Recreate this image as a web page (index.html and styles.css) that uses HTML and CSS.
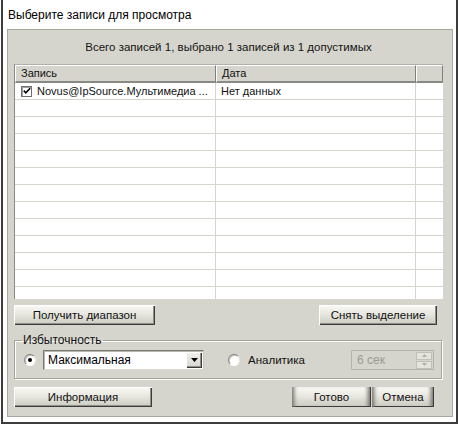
FILE: index.html
```html
<!DOCTYPE html>
<html lang="ru">
<head>
    <meta charset="UTF-8">
    <title>Выберите записи для просмотра</title>
    <link rel="stylesheet" href="styles.css">
</head>
<body>

    <div class="window">
        <div class="title">Выберите записи для просмотра</div>

        <div class="panel">
            <div class="summary">Всего записей 1, выбрано 1 записей из 1 допустимых</div>

            <div class="table">
                <div class="row head">
                    <div class="cell c1">Запись</div>
                    <div class="cell c2">Дата</div>
                    <div class="cell c3"></div>
                </div>
                <div class="body">
                    <div class="row">
                        <div class="cell c1">
                            <span class="check">
                                <svg width="8" height="8" viewBox="0 0 8 8"><polyline points="0.8,3.6 2.8,5.8 7.2,1.2" fill="none" stroke="#000" stroke-width="1.6"/></svg>
                            </span>
                            <span class="name">Novus@IpSource.Мультимедиа ...</span>
                        </div>
                        <div class="cell c2">Нет данных</div>
                        <div class="cell c3"></div>
                    </div>
                    <div class="row"><div class="cell c1"></div><div class="cell c2"></div><div class="cell c3"></div></div>
                    <div class="row"><div class="cell c1"></div><div class="cell c2"></div><div class="cell c3"></div></div>
                    <div class="row"><div class="cell c1"></div><div class="cell c2"></div><div class="cell c3"></div></div>
                    <div class="row"><div class="cell c1"></div><div class="cell c2"></div><div class="cell c3"></div></div>
                    <div class="row"><div class="cell c1"></div><div class="cell c2"></div><div class="cell c3"></div></div>
                    <div class="row"><div class="cell c1"></div><div class="cell c2"></div><div class="cell c3"></div></div>
                    <div class="row"><div class="cell c1"></div><div class="cell c2"></div><div class="cell c3"></div></div>
                    <div class="row"><div class="cell c1"></div><div class="cell c2"></div><div class="cell c3"></div></div>
                    <div class="row"><div class="cell c1"></div><div class="cell c2"></div><div class="cell c3"></div></div>
                    <div class="row"><div class="cell c1"></div><div class="cell c2"></div><div class="cell c3"></div></div>
                    <div class="row"><div class="cell c1"></div><div class="cell c2"></div><div class="cell c3"></div></div>
                    <div class="row"><div class="cell c1"></div><div class="cell c2"></div><div class="cell c3"></div></div>
                </div>
            </div>

            <div class="actions">
                <button class="btn btn-range">Получить диапазон</button>
                <button class="btn btn-clear">Снять выделение</button>
            </div>

            <fieldset class="group">
                <legend>Избыточность</legend>
                <div class="group-row">
                    <span class="radio checked"></span>
                    <div class="combo">
                        <span class="combo-text">Максимальная</span>
                        <span class="combo-btn">
                            <svg width="7" height="4" viewBox="0 0 7 4"><polygon points="0,0 7,0 3.5,4" fill="#000"/></svg>
                        </span>
                    </div>
                    <span class="radio second"></span>
                    <span class="radio-label">Аналитика</span>
                    <div class="spin">
                        <span class="spin-text">6 сек</span>
                        <span class="spin-btns">
                            <span class="spin-btn"><svg width="5" height="3" viewBox="0 0 5 3"><polygon points="0,3 5,3 2.5,0" fill="#b0b0a8"/></svg></span>
                            <span class="spin-btn"><svg width="5" height="3" viewBox="0 0 5 3"><polygon points="0,0 5,0 2.5,3" fill="#b0b0a8"/></svg></span>
                        </span>
                    </div>
                </div>
            </fieldset>

            <div class="footer">
                <button class="btn btn-info">Информация</button>
                <button class="btn btn-ok">Готово</button>
                <button class="btn btn-cancel">Отмена</button>
            </div>
        </div>
    </div>

</body>
</html>
```

FILE: styles.css
```css
body {
    margin: 0;
    background: #fff;
    font-family: 'Liberation Sans', Arial, sans-serif;
    font-size: 11px;
    color: #111;
}

.window {
    box-sizing: border-box;
    width: 457px;
    height: 424px;
    margin-left: 1px;
    border: 2px solid #3c3c3c;
    border-top: none;
    background: #fff;
}

.title {
    height: 29px;
    padding-left: 5px;
    font-size: 12px;
    line-height: 30px;
    color: #000;
}

.panel {
    margin: 0 3px 0 4px;
    padding: 0 9px 9px 6px;
    background: #d6d5cd;
    border: 1px solid #a8a8a0;
}

.summary {
    height: 34px;
    line-height: 35px;
    text-align: center;
    font-size: 11.5px;
    color: #141414;
}

/* table */

.table {
    width: 428px;
    border-left: 1px solid #8a8a84;
    border-top: 1px solid #b0b0a8;
    background: #fff;
}

.row {
    display: grid;
    grid-template-columns: 201px 200px 27px;
    height: 17px;
}

.cell {
    box-sizing: border-box;
    border-right: 1px solid #d6d5cd;
    border-bottom: 1px solid #d6d5cd;
    line-height: 16px;
    padding-left: 5px;
    white-space: nowrap;
    overflow: hidden;
}

.cell.c1 {
    display: flex;
    align-items: center;
}

.cell.c3 {
    border-right: none;
}

.head {
    height: 18px;
}

.head .cell {
    background: #d6d5cd;
    border-top: 1px solid #fff;
    border-left: 1px solid #fff;
    border-right: 1px solid #808080;
    border-bottom: 2px solid #8a8a84;
    line-height: 15px;
}

.body {
    height: 216px;
    overflow: hidden;
}

.check {
    box-sizing: border-box;
    display: inline-flex;
    align-items: center;
    justify-content: center;
    width: 11px;
    height: 11px;
    margin: 0 5px 0 1px;
    background: #fff;
    border: 1px solid #6f6f6f;
    box-shadow: inset 1px 1px 0 #a0a0a0;
}

/* buttons */

.btn {
    box-sizing: border-box;
    height: 20px;
    padding: 0;
    border: none;
    font-family: 'Liberation Sans', Arial, sans-serif;
    font-size: 11.5px;
    color: #111;
    background: linear-gradient(#fafaf6, #e8e7e0 45%, #cbcabf);
    box-shadow: inset 1px 1px 0 #fff, inset -1px -1px 0 #3c3c3c, inset -2px -2px 0 #908f88;
}

.actions {
    display: flex;
    justify-content: space-between;
    margin-top: 6px;
    padding-right: 6px;
}

.btn-range {
    width: 141px;
}

.btn-clear {
    width: 118px;
}

.footer {
    display: flex;
    gap: 1px;
    margin-top: 8px;
}

.btn-info {
    width: 138px;
    margin-right: auto;
}

.btn-ok {
    width: 79px;
}

.btn-cancel {
    width: 62px;
    margin-right: 9px;
}

.btn-ok,
.btn-cancel {
    box-shadow: inset 5px 0 4px -3px #6e6d66, inset -1px -1px 0 #3c3c3c, inset -6px 0 4px -3px #6e6d66, inset 0 1px 0 #fff;
}

/* redundancy group */

.group {
    box-sizing: border-box;
    width: 428px;
    margin: 9px 0 0;
    padding: 3px 7px 8px 9px;
    border: 1px solid #a4a39c;
    box-shadow: inset 1px 1px 0 #fff, 1px 1px 0 #fff;
}

.group legend {
    margin-left: -2px;
    padding: 0 1px;
    line-height: 13px;
    font-size: 12px;
    color: #111;
}

.group-row {
    display: flex;
    align-items: center;
    height: 20px;
}

.radio {
    box-sizing: border-box;
    display: inline-flex;
    align-items: center;
    justify-content: center;
    width: 12px;
    height: 12px;
    border-radius: 50%;
    background: #fff;
    border: 1px solid;
    border-color: #7a7a74 #e8e8e2 #fff #8a8a84;
    box-shadow: inset 1px 1px 0 #c8c8c0;
}

.radio.checked::after {
    content: '';
    width: 4px;
    height: 4px;
    border-radius: 50%;
    background: #000;
}

.combo {
    box-sizing: border-box;
    display: flex;
    align-items: center;
    justify-content: space-between;
    width: 161px;
    height: 20px;
    margin-left: 7px;
    padding: 0 1px 0 4px;
    background: #fff;
    border: 1px solid;
    border-color: #7a7a74 #c8c8c0 #d8d8d0 #7a7a74;
    box-shadow: inset 1px 1px 0 #b8b8b0;
    font-size: 12px;
    color: #000;
}

.combo-btn {
    box-sizing: border-box;
    display: flex;
    align-items: center;
    justify-content: center;
    width: 16px;
    height: 16px;
    background: linear-gradient(#f2f1ec, #d6d5cd);
    box-shadow: inset 1px 1px 0 #fff, inset -1px -1px 0 #3c3c3c, inset -2px -2px 0 #908f88;
}

.radio.second {
    margin-left: 24px;
}

.radio-label {
    margin-left: 8px;
    font-size: 11.5px;
    color: #111;
}

.spin {
    box-sizing: border-box;
    display: flex;
    align-items: center;
    justify-content: space-between;
    width: 83px;
    height: 20px;
    margin-left: auto;
    padding: 0 1px 0 5px;
    border: 1px solid #b4b3ac;
    background: #d6d5cd;
    color: #9a9a94;
    font-size: 12px;
}

.spin-btns {
    display: flex;
    flex-direction: column;
    gap: 1px;
}

.spin-btn {
    box-sizing: border-box;
    display: flex;
    align-items: center;
    justify-content: center;
    width: 16px;
    height: 8px;
    border: 1px solid #c0bfb8;
    background: #e4e3dc;
}
```
